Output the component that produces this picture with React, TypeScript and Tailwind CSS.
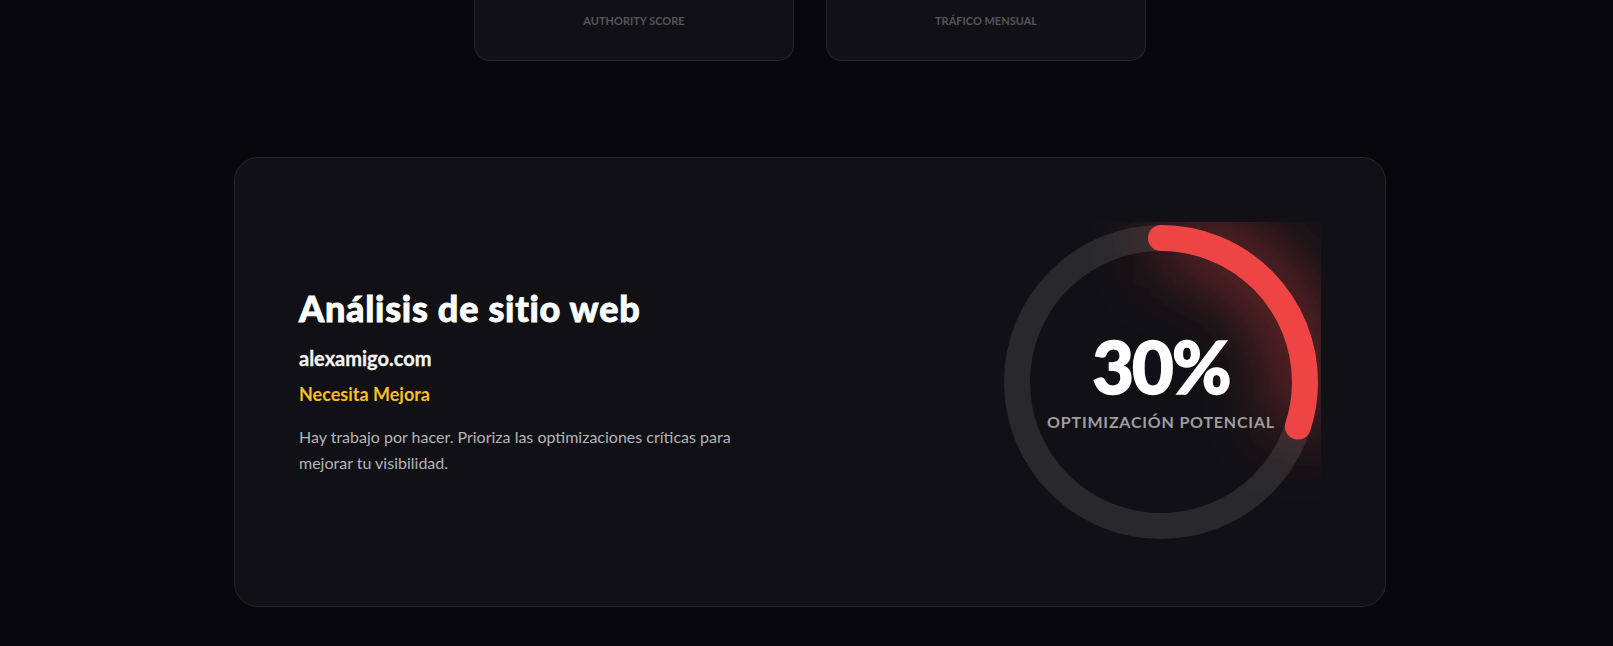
import React from "react";

const R = 144;
const C = 2 * Math.PI * R;
const pct = 30;

const StatCard = ({ label }: { label: string }) => {
  return (
    <div className="w-[320px] h-[61px] bg-[#111115] border-x border-b border-[#25252a] rounded-b-2xl pt-[13px] text-center">
      <span className="block text-[11px] leading-[15px] font-bold text-[#55555c] uppercase">{label}</span>
    </div>
  );
};

const ScoreRing = () => {
  const dash = `${(C * pct) / 100} ${C}`;
  return (
    <div className="relative w-[320px] h-[320px] shrink-0">
      <svg width="320" height="320" viewBox="0 0 320 320">
        <defs>
          <filter id="glow" filterUnits="userSpaceOnUse" x="93" y="0" width="227" height="292">
            <feGaussianBlur stdDeviation="34" />
          </filter>
        </defs>
        <circle cx="160" cy="160" r={R} fill="none" stroke="#29292c" strokeWidth="26" />
        <g filter="url(#glow)">
          <circle
            cx="160"
            cy="160"
            r={R}
            fill="none"
            stroke="#ef4444"
            strokeOpacity="0.5"
            strokeWidth="50"
            strokeDasharray={dash}
            transform="rotate(-90 160 160)"
          />
        </g>
        <circle
          cx="160"
          cy="160"
          r={R}
          fill="none"
          stroke="#ef4444"
          strokeWidth="26"
          strokeLinecap="round"
          strokeDasharray={dash}
          transform="rotate(-90 160 160)"
        />
      </svg>
      <div className="absolute inset-0 flex flex-col items-center justify-center">
        <span className="text-[72px] leading-none font-black tracking-tight text-white [-webkit-text-stroke:1.5px_white]">30%</span>
        <span className="mt-2 text-base font-bold tracking-wider text-[#9d9da3] uppercase">Optimización potencial</span>
      </div>
    </div>
  );
};

export default function App() {
  return (
    <div className="min-h-screen h-[646px] bg-[#08080c] pl-[7px] font-['Lato','Liberation_Sans',sans-serif]">
      <div className="flex justify-center gap-8">
        <StatCard label="Authority Score" />
        <StatCard label="Tráfico Mensual" />
      </div>

      <div className="mt-24 mx-auto w-[1152px] bg-[#111115] border border-[#25252a] rounded-3xl p-16 flex items-center justify-between">
        <div className="flex flex-col">
          <h2 className="text-4xl font-black tracking-[0.02em] text-white [-webkit-text-stroke:0.8px_white]">Análisis de sitio web</h2>
          <p className="mt-4 text-xl font-bold text-[#f4f4f5] [-webkit-text-stroke:0.3px_#f4f4f5]">alexamigo.com</p>
          <p className="mt-2 text-lg font-bold text-[#fbbf24]">Necesita Mejora</p>
          <p className="mt-4 max-w-[450px] text-base leading-relaxed text-[#b4b4bb]">
            Hay trabajo por hacer. Prioriza las optimizaciones críticas para mejorar tu visibilidad.
          </p>
        </div>
        <ScoreRing />
      </div>
    </div>
  );
}
